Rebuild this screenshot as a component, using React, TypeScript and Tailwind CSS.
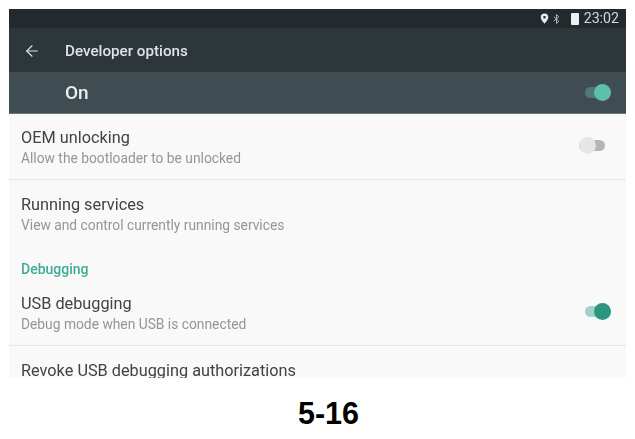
import React from 'react';
import { ArrowLeft } from 'lucide-react';

const Toggle = ({ track, thumb, thumbOn }: { track: string; thumb: string; thumbOn: boolean }) => (
  <div className={`flex h-4 w-[27px] items-center ${thumbOn ? 'justify-end' : 'justify-start'}`}>
    <div className={`flex h-[11px] w-[26px] items-center rounded-full ${thumbOn ? 'justify-end' : 'justify-start'} ${track}`}>
      <div className={`h-[17px] w-[17px] shrink-0 rounded-full ${thumb}`} />
    </div>
  </div>
);

const Row = ({ title, sub, children }: { title: string; sub: string; children?: React.ReactNode }) => (
  <div className="flex items-center justify-between pl-[12px] pr-[15px]">
    <div className="pt-[1px]">
      <div className="text-[16.3px] leading-[20px] text-[#404243]">{title}</div>
      <div className="mt-[1px] text-[13.8px] leading-[18px] text-[#939596]">{sub}</div>
    </div>
    {children}
  </div>
);

export default function App() {
  return (
    <div className="flex h-[439px] w-[635px] flex-col items-center bg-white pt-[9px] font-['Roboto',sans-serif]">
      <div className="flex h-[369px] w-[617px] flex-col overflow-hidden bg-[#f9f9f9] blur-[0.4px]">
        <div className="flex h-[19px] shrink-0 items-center justify-end bg-[#222a2d] pr-[7px] text-[#dfe3e4]">
          <svg width="9" height="11" viewBox="0 0 9 11" className="mr-[4px] text-[#e8ecec]">
            <path fillRule="evenodd" fill="currentColor" d="M4.5 0.5a3.8 3.8 0 0 0-3.8 3.8c0 2.6 3.8 6.4 3.8 6.4s3.800-3.800 3.800-6.400A3.800 3.800 0 0 0 4.500 0.500zm0 2.500a1.300 1.300 0 1 1 0 2.600 1.300 1.300 0 0 1 0-2.600z" />
          </svg>
          <svg width="7" height="10" viewBox="0 0 7 10" className="mr-[11px] text-[#aeb4b6]">
            <path fill="none" stroke="currentColor" strokeWidth="1" d="M0.800 2.800l5 4.400-2.300 2.300V0.500l2.300 2.300-5 4.400" />
          </svg>
          <div className="mr-[5px] h-[12px] w-[8px] rounded-[1px] bg-[#eef0f0]" />
          <span className="text-[14.2px] leading-none text-[#d5d9da]">23:02</span>
        </div>
        <div className="flex h-[44px] shrink-0 items-center bg-[#2c363b] pl-[14px] pt-[2px] text-[#dfe3e4]">
          <ArrowLeft size={18} strokeWidth={1.5} />
          <span className="ml-[24px] text-[15.2px] font-medium">Developer options</span>
        </div>
        <div className="flex h-[42px] shrink-0 items-center justify-between border-b border-[#6a7478] bg-[#3f4d52] pl-[56px] pr-[15px] pt-[2px]">
          <span className="text-[19px] font-medium text-[#eceeee]">On</span>
          <div className="pb-[2px]">
            <Toggle track="bg-[#4f7a78]" thumb="bg-[#5fc0aa]" thumbOn />
          </div>
        </div>
        <div className="flex h-[66px] shrink-0 flex-col justify-center border-b border-[#e6e6e6]">
          <Row title="OEM unlocking" sub="Allow the bootloader to be unlocked">
            <div className="pb-[2px] pr-[5px]">
              <Toggle track="bg-[#b5b5b5]" thumb="bg-[#e6e6e6]" thumbOn={false} />
            </div>
          </Row>
        </div>
        <div className="flex h-[66px] shrink-0 flex-col justify-center pt-[2px]">
          <Row title="Running services" sub="View and control currently running services" />
        </div>
        <div className="shrink-0 pl-[12px] pt-[14px] text-[14px] font-medium leading-[18px] text-[#3fab95]">Debugging</div>
        <div className="flex h-[68px] shrink-0 flex-col justify-center border-b border-[#e6e6e6] pt-[3px]">
          <Row title="USB debugging" sub="Debug mode when USB is connected">
            <div className="pb-[4px]">
              <Toggle track="bg-[#9fd2c8]" thumb="bg-[#2d9683]" thumbOn />
            </div>
          </Row>
        </div>
        <div className="pl-[12px] pt-[15px] text-[16.3px] leading-[20px] text-[#404243]">Revoke USB debugging authorizations</div>
      </div>
      <div className="mt-[18px] pl-[22px] font-['Liberation_Sans',sans-serif] text-[30.5px] font-bold leading-[34px] text-black">5-16</div>
    </div>
  );
}
